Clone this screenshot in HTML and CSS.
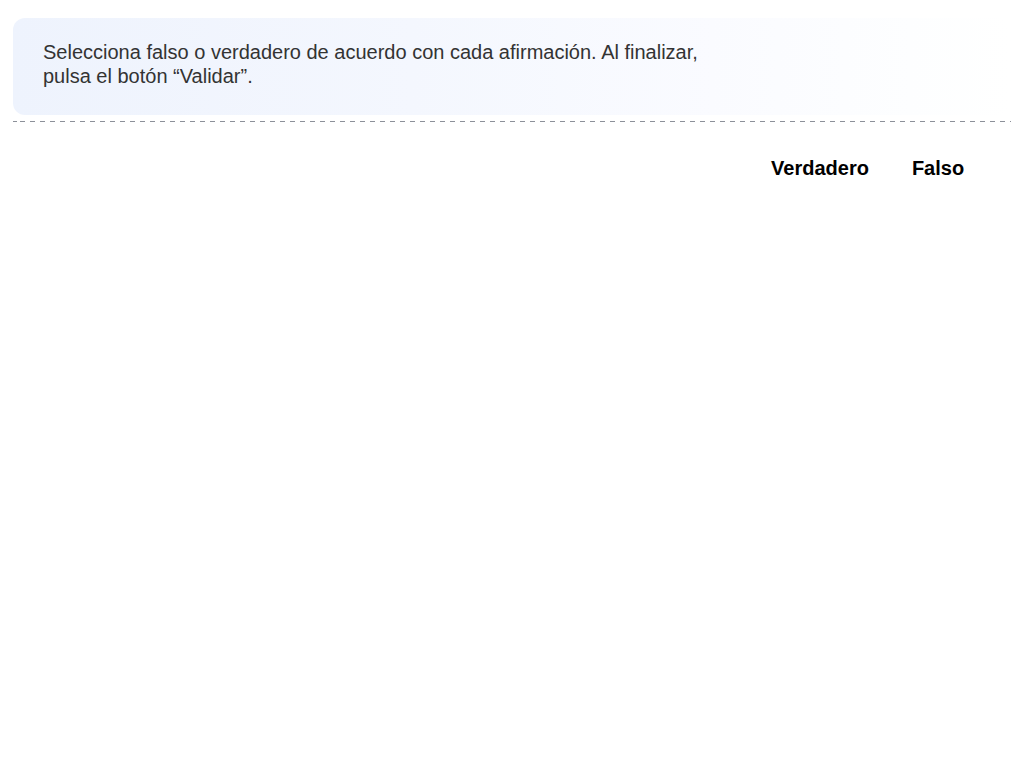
FILE: index.html
```html
<!DOCTYPE html>
<html lang="es">
<head>
<meta charset="utf-8">
<title>Verdadero o falso</title>
<link rel="stylesheet" href="styles.css">
</head>
<body>
<main class="activity">
  <div class="instructions">
    <p>Selecciona falso o verdadero de acuerdo con cada afirmación. Al finalizar,<br>pulsa el botón “Validar”.</p>
  </div>
  <div class="divider"></div>
  <div class="header-row">
    <div class="col-head">Verdadero</div>
    <div class="col-head">Falso</div>
  </div>
</main>
</body>
</html>
```
FILE: styles.css
```css
html, body {
  margin: 0;
  padding: 0;
  background: #ffffff;
}
body {
  font-family: "Liberation Sans", Arial, sans-serif;
}
.activity {
  padding: 18px 14px 0 13px;
}
.instructions {
  border-radius: 12px;
  background: linear-gradient(90deg, #eef3fd 0%, #f4f7fe 40%, #fafbff 70%, #fdfeff 90%, #ffffff 100%);
  padding: 22px 30px 27px;
}
.instructions p {
  margin: 0;
  font-size: 20px;
  line-height: 24px;
  color: #333333;
}
.divider {
  margin-top: 6px;
  height: 1px;
  background: repeating-linear-gradient(90deg, #8c9099 0 5px, transparent 5px 10px);
  background-position: 7px 0;
}
.header-row {
  display: flex;
  justify-content: flex-end;
  margin-top: 34px;
  padding-right: 14px;
}
.col-head {
  width: 118px;
  text-align: center;
  font-weight: bold;
  font-size: 20px;
  line-height: 24px;
  color: #000000;
}
```
